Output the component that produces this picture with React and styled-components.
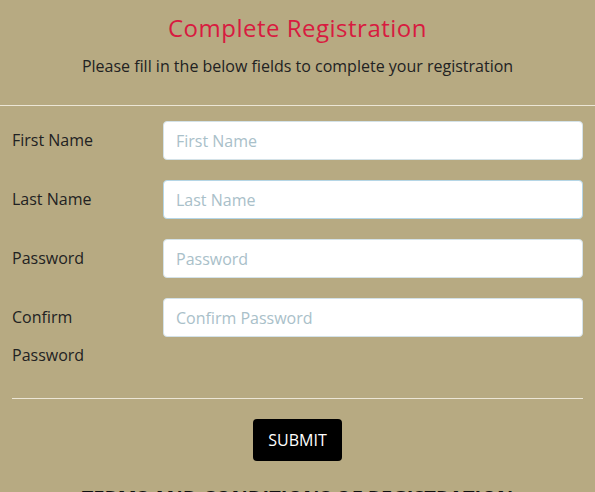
import React from "react";
import styled, { createGlobalStyle } from "styled-components";

const Global = createGlobalStyle`
  html, body { margin: 0; padding: 0; background: #b7aa82; }
  body { font-family: "Open Sans", "Liberation Sans", sans-serif; color: #222; }
  * { box-sizing: border-box; }
`;

const Page = styled.div`
  width: 595px;
`;

const Header = styled.header`
  display: flex;
  flex-direction: column;
  align-items: center;
  padding-top: 12px;
  border-bottom: 1px solid #ece6d6;
  height: 106px;
`;

const Title = styled.h1`
  margin: 0;
  font-weight: 400;
  font-size: 24px;
  line-height: 32px;
  letter-spacing: 0.5px;
  color: #d81b40;
`;

const Subtitle = styled.p`
  margin: 11px 0 0;
  font-size: 16px;
  line-height: 22px;
  color: #222;
`;

const Form = styled.form`
  padding: 15px 12px 0;
`;

const Row = styled.div`
  display: grid;
  grid-template-columns: 151px 1fr;
  align-items: start;
  margin-bottom: 20px;
`;

const Label = styled.label`
  font-size: 16px;
  line-height: 38px;
  width: 115px;
  color: #222;
`;

const Input = styled.input`
  width: 100%;
  height: 39px;
  padding: 0 12px;
  border: 1px solid #d4e2e8;
  border-radius: 4px;
  background: #fff;
  font-family: inherit;
  font-size: 16px;
  color: #333;
  outline: none;
  &::placeholder { color: #a9c0c9; }
  &:focus { border-color: #b5d6e6; }
`;

const Divider = styled.hr`
  margin: 24px 0 0;
  border: 0;
  border-top: 1px solid #ece6d6;
`;

const Actions = styled.div`
  display: flex;
  justify-content: center;
  padding: 20px 0 21px;
`;

const Submit = styled.button`
  height: 42px;
  padding: 0 15px;
  border: 0;
  border-radius: 4px;
  background: #000;
  color: #fff;
  font-family: inherit;
  font-size: 16px;
`;

const Footer = styled.h2`
  margin: 0;
  text-align: center;
  font-size: 20px;
  line-height: 32px;
  font-weight: 700;
  color: #111;
`;

const Fields = styled.div`
  display: flex;
  flex-direction: column;
  & > ${Row}:last-child { margin-bottom: 0; }
`;

const fields = [
  { label: "First Name", placeholder: "First Name", type: "text" },
  { label: "Last Name", placeholder: "Last Name", type: "text", focus: true },
  { label: "Password", placeholder: "Password", type: "password" },
  { label: "Confirm Password", placeholder: "Confirm Password", type: "password" },
];

export default function App() {
  return (
    <Page>
      <Global />
      <Header>
        <Title>Complete Registration</Title>
        <Subtitle>Please fill in the below fields to complete your registration</Subtitle>
      </Header>
      <Form onSubmit={(e) => e.preventDefault()}>
        <Fields>
          {fields.map((f) => (
            <Row key={f.label}>
              <Label>{f.label}</Label>
              <Input type={f.type} placeholder={f.placeholder} autoFocus={f.focus} />
            </Row>
          ))}
        </Fields>
        <Divider />
        <Actions>
          <Submit type="submit">SUBMIT</Submit>
        </Actions>
      </Form>
      <Footer>TERMS AND CONDITIONS OF REGISTRATION</Footer>
    </Page>
  );
}
